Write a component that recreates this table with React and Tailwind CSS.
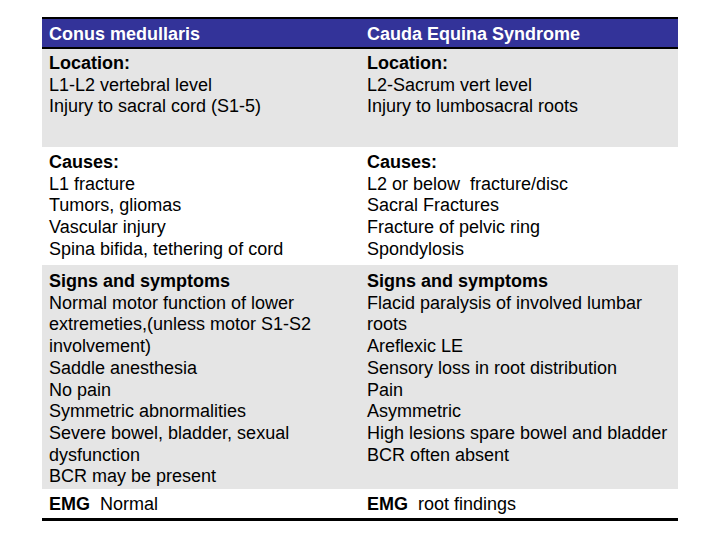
const rows = [
  {
    bg: 'bg-[#e5e5e5]',
    h: 'h-[98px] pt-[4px]',
    left: ['Location:', 'L1-L2 vertebral level', 'Injury to sacral cord (S1-5)'],
    right: ['Location:', 'L2-Sacrum vert level', 'Injury to lumbosacral roots'],
  },
  {
    bg: 'bg-white',
    h: 'h-[118px] pt-[5px]',
    left: ['Causes:', 'L1 fracture', 'Tumors, gliomas', 'Vascular injury', 'Spina bifida, tethering of cord'],
    right: ['Causes:', 'L2 or below  fracture/disc', 'Sacral Fractures', 'Fracture of pelvic ring', 'Spondylosis'],
  },
  {
    bg: 'bg-[#e5e5e5]',
    h: 'h-[224px] pt-[6px]',
    left: [
      'Signs and symptoms',
      'Normal motor function of lower',
      'extremeties,(unless motor S1-S2',
      'involvement)',
      'Saddle anesthesia',
      'No pain',
      'Symmetric abnormalities',
      'Severe bowel, bladder, sexual',
      'dysfunction',
      'BCR may be present',
    ],
    right: [
      'Signs and symptoms',
      'Flacid paralysis of involved lumbar',
      'roots',
      'Areflexic LE',
      'Sensory loss in root distribution',
      'Pain',
      'Asymmetric',
      'High lesions spare bowel and bladder',
      'BCR often absent',
    ],
  },
];

function Cell({ lines }) {
  return (
    <div className="pl-[7px] whitespace-pre">
      {lines.map((line, i) => (
        <div key={i} className={i === 0 ? 'font-bold' : ''}>
          {line}
        </div>
      ))}
    </div>
  );
}

export default function App() {
  return (
    <div
      className="w-[720px] h-[540px] bg-white pt-[17px] pl-[42px] text-[18px] leading-[21.7px] text-black"
      style={{ fontFamily: '"Liberation Sans", Arial, sans-serif' }}
    >
      <div className="w-[636px] border-t-2 border-b-[3px] border-black">
        {/* header */}
        <div className="grid grid-cols-2 h-[30px] pt-[5px] bg-[#333399] border-b-2 border-black text-white font-bold">
          <div className="pl-[7px]">Conus medullaris</div>
          <div className="pl-[7px]">Cauda Equina Syndrome</div>
        </div>

        {rows.map((row, i) => (
          <div key={i} className={`grid grid-cols-2 ${row.bg} ${row.h}`}>
            <Cell lines={row.left} />
            <Cell lines={row.right} />
          </div>
        ))}

        <div className="grid grid-cols-2 h-[29px] pt-[5px] bg-white whitespace-pre">
          <div className="pl-[7px]">
            <span className="font-bold">EMG</span>  Normal
          </div>
          <div className="pl-[7px]">
            <span className="font-bold">EMG</span>  root findings
          </div>
        </div>
      </div>
    </div>
  );
}
